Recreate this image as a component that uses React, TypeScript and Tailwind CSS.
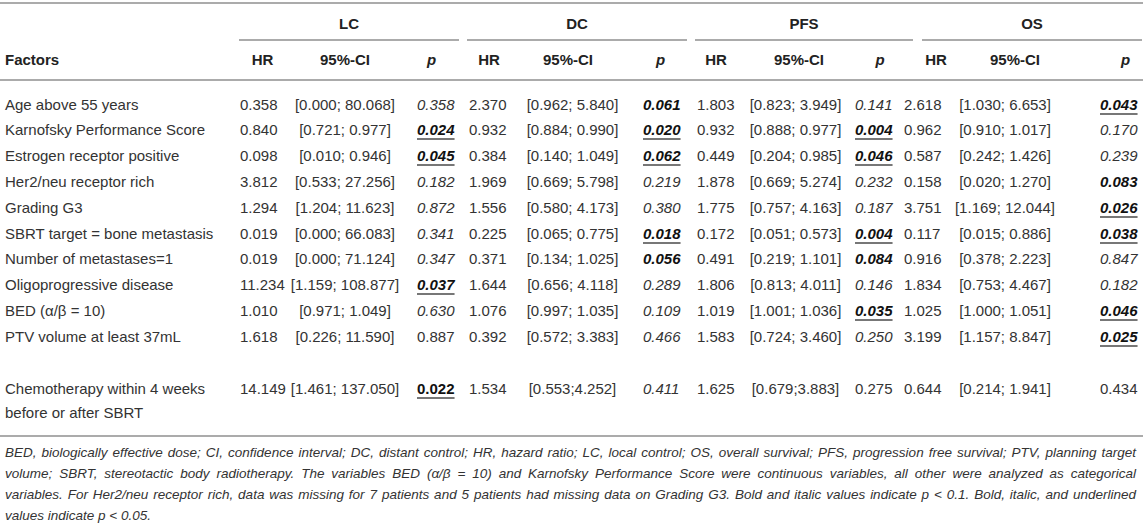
import React from "react";

type PStyle = "i" | "bi" | "biu" | "n" | "bu";
type Stat = [string, string, string, PStyle];

const GROUPS = [
    { name: "LC", line: "mx-1" },
    { name: "DC", line: "mx-1" },
    { name: "PFS", line: "ml-1 mr-[-13px]" },
    { name: "OS", line: "ml-[22px] mr-px" },
];

// per column: where the numbers sit, where the header sits
const COLS = [
    { data: "justify-start pl-[5px]", head: "justify-center" },
    { data: "justify-center", head: "justify-center" },
    { data: "justify-start pl-[17px]", head: "justify-center" },
    { data: "justify-start pl-[6px]", head: "justify-center" },
    { data: "justify-center", head: "justify-center pr-[9px]" },
    { data: "justify-start pl-[13px]", head: "justify-center" },
    { data: "justify-start pl-[6px]", head: "justify-center" },
    { data: "justify-center", head: "justify-center pl-[7px]" },
    { data: "justify-start pl-[5px]", head: "justify-center pl-[10px]" },
    { data: "justify-start pl-[4px]", head: "justify-center pl-[4px]" },
    { data: "justify-center pr-[20px]", head: "justify-center" },
    { data: "justify-start pl-[38px]", head: "justify-start pl-[59px]" },
];

const ROWS: { label: string; stats: Stat[] }[] = [
    { label: "Age above 55 years", stats: [["0.358", "[0.000; 80.068]", "0.358", "i"], ["2.370", "[0.962; 5.840]", "0.061", "bi"], ["1.803", "[0.823; 3.949]", "0.141", "i"], ["2.618", "[1.030; 6.653]", "0.043", "biu"]] },
    { label: "Karnofsky Performance Score", stats: [["0.840", "[0.721; 0.977]", "0.024", "biu"], ["0.932", "[0.884; 0.990]", "0.020", "biu"], ["0.932", "[0.888; 0.977]", "0.004", "biu"], ["0.962", "[0.910; 1.017]", "0.170", "i"]] },
    { label: "Estrogen receptor positive", stats: [["0.098", "[0.010; 0.946]", "0.045", "biu"], ["0.384", "[0.140; 1.049]", "0.062", "biu"], ["0.449", "[0.204; 0.985]", "0.046", "biu"], ["0.587", "[0.242; 1.426]", "0.239", "i"]] },
    { label: "Her2/neu receptor rich", stats: [["3.812", "[0.533; 27.256]", "0.182", "i"], ["1.969", "[0.669; 5.798]", "0.219", "i"], ["1.878", "[0.669; 5.274]", "0.232", "i"], ["0.158", "[0.020; 1.270]", "0.083", "bi"]] },
    { label: "Grading G3", stats: [["1.294", "[1.204; 11.623]", "0.872", "i"], ["1.556", "[0.580; 4.173]", "0.380", "i"], ["1.775", "[0.757; 4.163]", "0.187", "i"], ["3.751", "[1.169; 12.044]", "0.026", "biu"]] },
    { label: "SBRT target = bone metastasis", stats: [["0.019", "[0.000; 66.083]", "0.341", "i"], ["0.225", "[0.065; 0.775]", "0.018", "biu"], ["0.172", "[0.051; 0.573]", "0.004", "biu"], ["0.117", "[0.015; 0.886]", "0.038", "biu"]] },
    { label: "Number of metastases=1", stats: [["0.019", "[0.000; 71.124]", "0.347", "i"], ["0.371", "[0.134; 1.025]", "0.056", "bi"], ["0.491", "[0.219; 1.101]", "0.084", "bi"], ["0.916", "[0.378; 2.223]", "0.847", "i"]] },
    { label: "Oligoprogressive disease", stats: [["11.234", "[1.159; 108.877]", "0.037", "biu"], ["1.644", "[0.656; 4.118]", "0.289", "i"], ["1.806", "[0.813; 4.011]", "0.146", "i"], ["1.834", "[0.753; 4.467]", "0.182", "i"]] },
    { label: "BED (α/β = 10)", stats: [["1.010", "[0.971; 1.049]", "0.630", "i"], ["1.076", "[0.997; 1.035]", "0.109", "i"], ["1.019", "[1.001; 1.036]", "0.035", "biu"], ["1.025", "[1.000; 1.051]", "0.046", "biu"]] },
    { label: "PTV volume at least 37mL", stats: [["1.618", "[0.226; 11.590]", "0.887", "n"], ["0.392", "[0.572; 3.383]", "0.466", "i"], ["1.583", "[0.724; 3.460]", "0.250", "i"], ["3.199", "[1.157; 8.847]", "0.025", "biu"]] },
];

const CHEMO: Stat[] = [
    ["14.149", "[1.461; 137.050]", "0.022", "bu"],
    ["1.534", "[0.553;4.252]", "0.411", "i"],
    ["1.625", "[0.679;3.883]", "0.275", "n"],
    ["0.644", "[0.214; 1.941]", "0.434", "n"],
];

const P_CLASS: Record<PStyle, string> = {
    n: "",
    i: "italic",
    bi: "italic font-bold text-[#111]",
    biu: "italic font-bold text-[#111] underline decoration-2 decoration-[#777] underline-offset-[3px]",
    bu: "font-bold text-[#111] underline decoration-2 decoration-[#777] underline-offset-[3px]",
};

const Line = () => <div className="col-span-full h-[2px] bg-[#ababab]" />;

function StatCells({ stats, tall }: { stats: Stat[]; tall?: boolean }) {
    const base = tall ? "h-[48px] leading-[24px] flex items-start" : "h-[25.8px] flex items-center";
    return (
        <>
            {stats.map((s, g) =>
                [s[0], s[1], <span className={P_CLASS[s[3]]}>{s[2]}</span>].map((v, k) => (
                    <div key={g * 3 + k} className={`${base} ${COLS[g * 3 + k].data}`}>{v}</div>
                ))
            )}
        </>
    );
}

export default function App() {
    return (
        <div className="w-[1143px] h-[524px] overflow-hidden bg-white pt-[2px] text-[#333] font-['Liberation_Sans',Arial,sans-serif]">
            <div className="grid grid-cols-[235px_55px_110px_63px_52px_115px_61px_50px_109px_50px_68px_94px_81px] text-[15px] whitespace-nowrap">
                <Line />

                {/* group headers */}
                <div />
                {GROUPS.map((g) => (
                    <div key={g.name} className="col-span-3">
                        <div className={`${g.line} border-b-2 border-[#ababab]`}>
                            <div className="h-[35px] pt-[5px] flex items-center justify-center font-bold text-[#222]">{g.name}</div>
                        </div>
                    </div>
                ))}

                {/* column headers */}
                <div className="h-[38px] flex items-center pl-[5px] font-bold text-[#222]">Factors</div>
                {COLS.map((c, i) => (
                    <div key={i} className={`h-[38px] flex items-center font-bold text-[#222] ${c.head}`}>
                        {i % 3 === 0 ? "HR" : i % 3 === 1 ? "95%-CI" : <span className="italic">p</span>}
                    </div>
                ))}
                <Line />
                <div className="col-span-full h-[11px]" />

                {ROWS.map((r) => (
                    <React.Fragment key={r.label}>
                        <div className="h-[25.8px] flex items-center pl-[5px]">{r.label}</div>
                        <StatCells stats={r.stats} />
                    </React.Fragment>
                ))}

                <div className="col-span-full h-[27px]" />
                <div className="h-[48px] leading-[24px] pl-[5px]">Chemotherapy within 4 weeks<br />before or after SBRT</div>
                <StatCells stats={CHEMO} tall />
                <div className="col-span-full h-[10px]" />
                <Line />
            </div>

            <div className="mt-[5px] pl-[5px] pr-[7px] italic text-[13.5px] leading-[21px] text-[#333]">
                <p className="text-justify [text-align-last:justify] whitespace-nowrap">BED, biologically effective dose; CI, confidence interval; DC, distant control; HR, hazard ratio; LC, local control; OS, overall survival; PFS, progression free survival; PTV, planning target</p>
                <p className="text-justify [text-align-last:justify] whitespace-nowrap">volume; SBRT, stereotactic body radiotherapy. The variables BED (α/β = 10) and Karnofsky Performance Score were continuous variables, all other were analyzed as categorical</p>
                <p className="text-justify [text-align-last:justify] whitespace-nowrap">variables. For Her2/neu receptor rich, data was missing for 7 patients and 5 patients had missing data on Grading G3. Bold and italic values indicate p &lt; 0.1. Bold, italic, and underlined</p>
                <p>values indicate p &lt; 0.05.</p>
            </div>
        </div>
    );
}
